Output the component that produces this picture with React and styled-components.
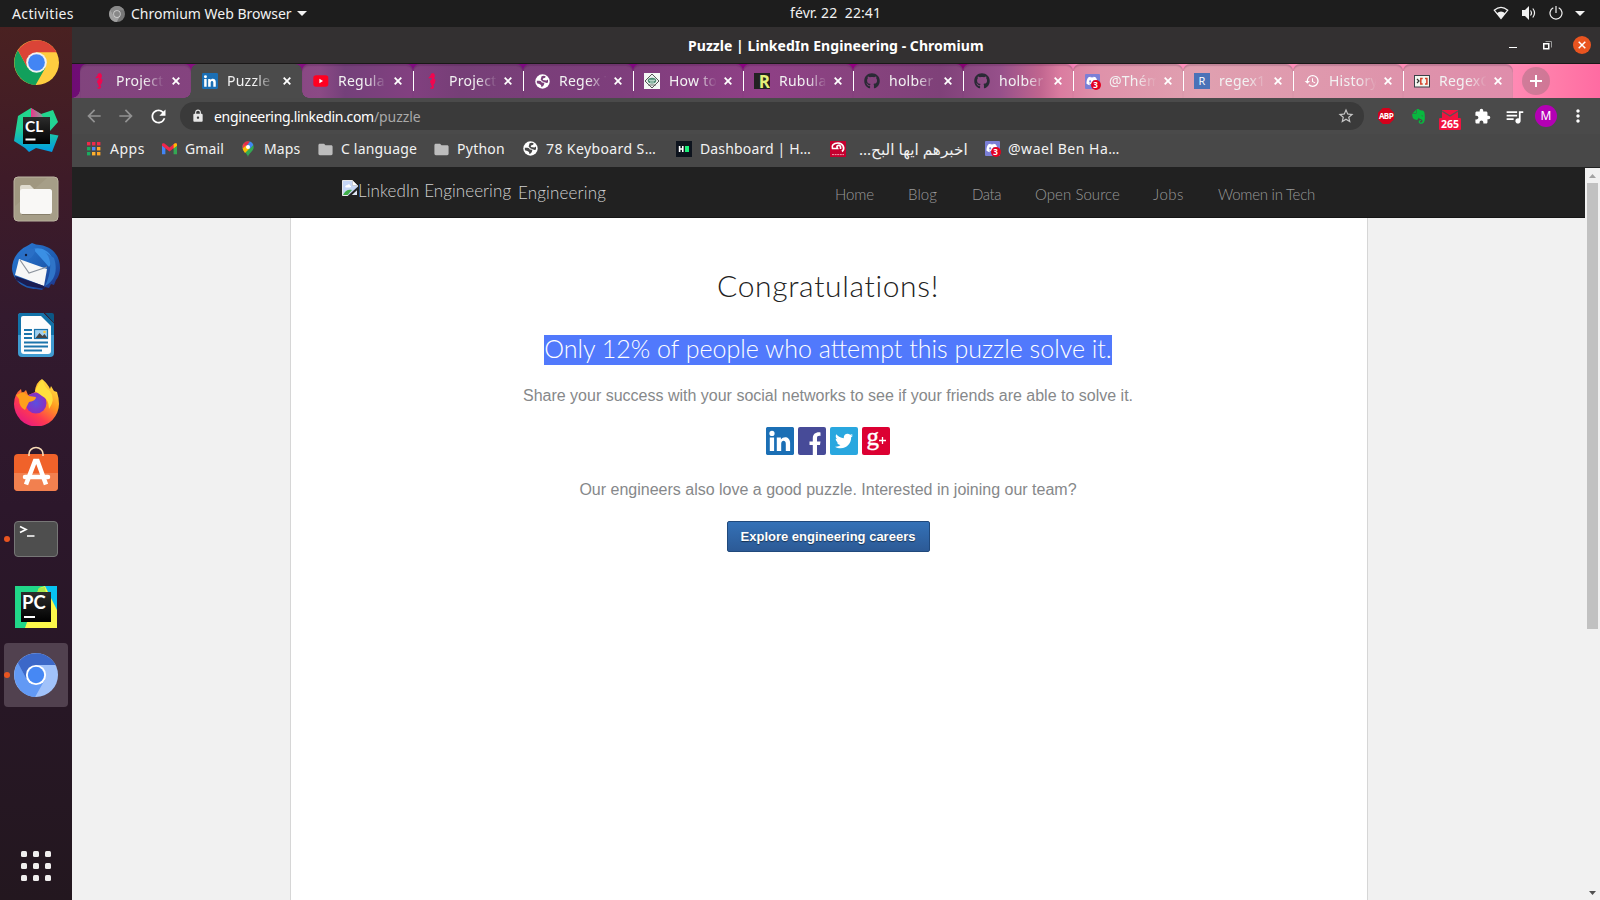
import React from "react";
import styled, { createGlobalStyle, css } from "styled-components";
import { MdArrowBack, MdArrowForward, MdRefresh, MdLock, MdStarBorder, MdExtension, MdQueueMusic, MdMoreVert, MdHistory, MdFolder } from "react-icons/md";
import { FaEvernote, FaGithub, FaTwitter, FaDiscord } from "react-icons/fa";

const UI = '"Noto Sans", "DejaVu Sans", sans-serif';
const SITE = 'Lato, "Liberation Sans", sans-serif';

const Global = createGlobalStyle`
  *, *::before, *::after { box-sizing: border-box; }
  body { margin: 0; overflow: hidden; background: #1d1d1d; }
  svg { display: block; flex: none; }
`;

const Screen = styled.div`
  width: 1600px; height: 900px; display: flex; flex-direction: column; overflow: hidden;
  font-family: ${UI}; font-size: 14px; color: #f2f2f2;
`;

const Label = styled.span`
  display: block; flex: none; white-space: pre;
  width: ${(p) => (p.$w ? `${p.$w}px` : "auto")};
  letter-spacing: ${(p) => p.$ls || 0}px;
`;

/* ---------- top panel ---------- */
const Panel = styled.header`
  height: 27px; flex: none; background: #1d1d1d; display: grid; grid-template-columns: 790px 1fr auto;
  align-items: center; line-height: 26px; padding-right: 15px;
`;
const PanelLeft = styled.div`display: flex; align-items: center; padding-left: 12px;`;
const AppMenu = styled.div`display: flex; align-items: center; gap: 6px; margin-left: 35px;`;
const Clock = styled.div`display: flex; margin-top: -1px;`;
const Tray = styled.div`display: flex; align-items: center; gap: 12px; margin-top: -1px;`;

/* ---------- dock ---------- */
const Body = styled.div`flex: 1; display: flex; min-height: 0;`;
const Dock = styled.nav`
  width: 72px; flex: none; padding: 4px 4px 19px; display: flex; flex-direction: column; gap: 4px;
  background: linear-gradient(#4a2121 0, #3e1b28 150px, #331a2e 290px, #2c172b 480px, #271725 680px, #23171f 873px);
`;
const DockItem = styled.div`
  position: relative; width: 64px; height: 64px; flex: none; border-radius: 4px;
  display: flex; align-items: center; justify-content: center; padding-bottom: ${(p) => p.$lift || 0}px;
  background: ${(p) => (p.$active ? "#51414f" : "transparent")};
`;
const RunningDot = styled.i`
  position: absolute; left: 0; top: 29px; width: 6px; height: 6px; border-radius: 50%; background: #e95420;
`;
const AppGrid = styled.div`
  margin: auto auto 0; display: grid; grid-template-columns: repeat(3, 6px); gap: 6px;
`;
const GridDot = styled.i`width: 6px; height: 6px; border-radius: 1.5px; background: #f0eeee;`;

/* ---------- window ---------- */
const Window = styled.section`flex: 1; min-width: 0; display: flex; flex-direction: column;`;
const TitleBar = styled.div`
  height: 37px; flex: none; background: #333031; border-bottom: 1px solid #1a1818; display: grid;
  grid-template-columns: 616px 1fr auto; align-items: center; padding-right: 9px; font-weight: 700; color: #fff;
`;
const WindowControls = styled.div`display: flex; align-items: center;`;
const Minimize = styled.i`width: 8px; height: 1px; background: #fff; margin: 5px 26px 0 0;`;
const CloseCircle = styled.div`
  width: 18px; height: 18px; border-radius: 50%; background: #e95420; margin-left: 21px;
  display: grid; place-items: center;
`;

const TabStrip = styled.div`
  height: 34px; flex: none; display: flex; padding-left: 8px;
  background: linear-gradient(90deg, #6e0c74 0, #86107f 120px, #7c0a80 500px, #93007f 800px, #7f0070 880px, #a5107f 940px, #ff8fbe 1010px, #ff8ab4 1440px, #ff7aa8 1490px, #ff6ba2 1528px);
`;
const TAB_FILL = "linear-gradient(90deg, #81447d 72px, #864380 250px, #8b4a85 320px, #74407a 345px, #824080 410px, #763f77 460px, #7e3e7c 620px, #8f4086 760px, #87437e 860px, #7f4179 940px, #96508a 1000px, #c0658f 1040px, #da7ca0 1060px, #df92aa 1100px, #e0a0b0 1200px, #de93ab 1400px, #df8dab 1514px) fixed";
const Tab = styled.div`
  position: relative; width: ${(p) => p.$w}px; height: 34px; flex: none; display: flex; align-items: center;
  padding-left: 11px; border-radius: 7px 7px 0 0;
  ${(p) => p.$active ? css`
    background: #4b4b4b;
    &::before, &::after { content: ""; position: absolute; bottom: 0; width: 7px; height: 7px; z-index: 1; }
    &::before { left: -7px; background: radial-gradient(circle at 0 0, transparent 6.5px, #4b4b4b 7px); }
    &::after { right: -7px; background: radial-gradient(circle at 100% 0, transparent 6.5px, #4b4b4b 7px); }
  ` : css`
    background: ${TAB_FILL};
    box-shadow: inset 0 2px 1px rgba(40, 0, 40, 0.16);
  `}
  ${(p) => p.$first && css`
    &::before { content: ""; position: absolute; left: -8px; bottom: 0; width: 8px; height: 8px; background: radial-gradient(circle at 0 0, transparent 7.5px, #81447d 8px); }
  `}
`;
const Divider = styled.i`position: absolute; right: -1px; top: 7px; width: 1px; height: 20px; background: #fff; z-index: 1;`;
const TabIcon = styled.div`width: 16px; height: 16px; flex: none; display: grid; place-items: center;`;
const TabTitle = styled.div`
  width: 47px; margin: 0 ${(p) => (p.$tight ? 8 : 9)}px 0 9px; overflow: hidden; white-space: nowrap; flex: none; line-height: 20px;
  letter-spacing: 0.25px; mask-image: linear-gradient(90deg, #000 28px, transparent 48px);
`;
const NewTab = styled.div`
  width: 28px; height: 28px; margin: 3px 0 0 9px; border-radius: 50%; background: rgba(150, 110, 125, 0.45);
  display: grid; place-items: center;
`;

const Toolbar = styled.div`
  height: 36px; flex: none; display: flex; align-items: center; background: #4a4a4a; padding: 0 6px;
`;
const ToolSlot = styled.div`width: 32px; height: 32px; flex: none; display: flex; align-items: center; justify-content: center;`;
const AddressBar = styled.div`
  flex: 1; height: 28px; margin: 0 6px; border-radius: 14px; background: #3a3a3a; display: flex; align-items: center;
  padding: 0 9px 0 11px;
`;
const Url = styled.div`display: flex; flex: 1; margin-left: 9px; color: #fff;`;
const UrlPath = styled(Label)`color: #a9a9a9;`;
const AbpBadge = styled.div`
  width: 16px; height: 16px; background: #d5001b; color: #fff; font: 700 8px/16px "Open Sans", sans-serif; letter-spacing: -0.6px; text-align: center;
  clip-path: polygon(30% 0, 70% 0, 100% 30%, 100% 70%, 70% 100%, 30% 100%, 0 70%, 0 30%);
`;
const MailBadge = styled.div`display: flex; flex-direction: column; align-items: center; margin-top: 8px;`;
const MailCount = styled.div`
  width: 22px; height: 12px; border-radius: 1px; background: #f2123f; color: #fff; font: 700 10.5px/12px "Open Sans", sans-serif; text-align: center;
`;
const Avatar = styled.div`
  width: 22px; height: 22px; border-radius: 50%; background: #b400b4; color: #fff; font-size: 12px; line-height: 22px; text-align: center;
`;
const Bookmarks = styled.div`
  height: 33px; flex: none; display: flex; align-items: center; padding: 0 14px 4px; background: #484848; line-height: 20px;
`;
const Bookmark = styled.div`
  width: ${(p) => p.$slot}px; flex: none; display: flex; align-items: center; gap: ${(p) => p.$gap || 8}px;
`;
const Fav = styled.div`width: 16px; height: 16px; flex: none; display: grid; place-items: center;`;

/* ---------- page ---------- */
const Viewport = styled.div`flex: 1; display: flex; min-height: 0;`;
const Page = styled.div`flex: 1; display: flex; flex-direction: column; background: #f1f1f1; font-family: ${SITE};`;
const SiteHeader = styled.div`
  height: 51px; flex: none; background: #212121; border-bottom: 1px solid #151515; display: flex; align-items: center;
  padding-left: 270px; font-weight: 300;
`;
const Brand = styled.div`display: flex; width: 493px; color: #d0d0d0; font-size: 17px; line-height: 22px;`;
const BrandName = styled(Label)`margin: 2px 0 0 7px;`;
const SiteNav = styled.div`display: flex; color: #9a9a9a; font-size: 15px; line-height: 20px; margin-top: 3px;`;
const NavLink = styled.div`width: ${(p) => p.$slot}px;`;
const Sheet = styled.main`
  flex: 1; width: 1078px; margin-left: 218px; padding-right: 2px; background: #fff; border: solid #d6d6d6; border-width: 0 1px;
  display: flex; flex-direction: column; align-items: center; color: #86888a;
`;
const Heading = styled.h1`
  margin: 49px 0 0; font-size: 30px; line-height: 36px; font-weight: 300; color: #222; letter-spacing: 0.65px;
  font-variant-ligatures: none;
`;
const Highlight = styled.h2`
  margin: 32px 0 0; height: 30px; font-size: 25px; line-height: 27px; font-weight: 300; background: #5179fc; color: #fff;
`;
const Copy = styled.p`margin: ${(p) => p.$top}px 0 0; font: 16px/20px "Liberation Sans", Arial, sans-serif;`;
const ShareRow = styled.div`display: flex; gap: 4.3px; margin-top: 21px;`;
const Share = styled.div`
  width: 28px; height: 28px; border-radius: 2px; background: ${(p) => p.$bg}; color: #fff; display: grid; place-items: center; overflow: hidden;
`;
const CareerButton = styled.button`
  width: 203px; height: 31px; margin-top: 21px; padding: 0; border: 1px solid #20497c; border-radius: 2px;
  background: linear-gradient(#3471b7, #2c5a96); color: #fff; font: 700 13px/28px "Liberation Sans", Arial, sans-serif;
  text-shadow: 0 1px 1px rgba(0, 0, 0, 0.5);
`;
const ScrollTrack = styled.div`
  width: 15px; flex: none; background: #f1f1f1; border-top: 1px solid #212121; display: flex; flex-direction: column; align-items: center;
`;
const ScrollArrow = styled.div`width: 15px; height: 15px; display: grid; place-items: center;`;
const ScrollThumb = styled.div`width: 11px; height: 446px; background: #c1c1c1;`;
const ScrollRest = styled.div`flex: 1;`;

/* ---------- drawings ---------- */
const Wheel = ({ size, red, green, yellow, blue, ring = "#f1f1f1" }) => (
  <svg width={size} height={size} viewBox="0 0 48 48">
    <circle cx="24" cy="24" r="24" fill={yellow} />
    <path d="M4.2 11 A24 24 0 0 0 23 48 L33.5 29.5 L14.5 29.5Z" fill={green} />
    <path d="M4.2 11 A24 24 0 0 1 45.4 13 L24 13 L13.5 28Z" fill={red} />
    <circle cx="24" cy="24" r="11" fill={ring} />
    <circle cx="24" cy="24" r="8.9" fill={blue} />
  </svg>
);
const Cross = ({ size = 8, w = 1.8 }) => (
  <svg width={size} height={size} viewBox="0 0 8 8"><path d="M.7.7l6.6 6.6M7.3.7L.7 7.3" stroke="#fff" strokeWidth={w} /></svg>
);
const Caret = () => <svg width="10" height="5" viewBox="0 0 10 5"><path d="M0 0h10L5 5z" fill="#f2f2f2" /></svg>;
const Seahorse = () => (
  <svg width="16" height="16" viewBox="0 0 16 16">
    <path d="M7.4 .6L9.3 0L10.6 1.6L11 3.6L10 5.2L11 6.4L11.8 6.8L11.2 8.2L11 10L9.8 11.2L9.4 12.4L10.2 13.6L9.6 15.2L8 16L6.4 15.2L6.8 14L7.8 14.2L8.2 13.4L7.2 12.2L7 10.6L6 9.4L6.4 7.4L7.6 6.2L7.8 4.8L6.4 5L4.8 5.4L4.6 4.4L6.4 3L6.6 1.6Z" fill="#f0064f" />
  </svg>
);
const LinkedInMark = ({ size, radius = 1.5 }) => (
  <svg width={size} height={size} viewBox="0 0 28 28">
    <rect width="28" height="28" rx={radius} fill="#1b6fb5" />
    <circle cx="6" cy="6.4" r="2.6" fill="#fff" />
    <path d="M3.8 10.5h4.3V24H3.8zM10.8 10.5h4.1v1.9c2.7-3.8 9.2-2.8 9.2 3.4V24h-4.3v-7.3c0-4-4.6-3.7-4.6 0V24h-4.4z" fill="#fff" />
  </svg>
);
const YouTube = () => (
  <svg width="16" height="16" viewBox="0 0 16 16"><rect x=".3" y="2.2" width="15" height="11.6" rx="2.8" fill="#ff0021" /><path d="M6.4 5.8v4.4L10 8z" fill="#fff" /></svg>
);
const Globe = ({ sea = "#484848" }) => (
  <svg width="15" height="15" viewBox="0 0 15 15">
    <circle cx="7.5" cy="7.500" r="7.200" fill="#fff" />
    <path d="M1.800 6.800L4.400 6.800Q6.600 7 6.800 8.600L9.400 8.800Q8.800 12.800 6.400 13L6 11Q4.800 9.600 1.900 9.200Z" fill={sea} />
    <path d="M6.600 2.200Q9 1.200 10.600 2.200L10.200 3.800L8 4.600L7.800 6L11.400 6.400L13 5.600L13 8.400L11.600 9L9.600 8.200L7.200 7.200L5.600 5.400Z" fill={sea} />
  </svg>
);
const Geek = () => (
  <svg width="16" height="16" viewBox="0 0 16 16">
    <rect width="16" height="16" fill="#f4f8f6" /><path d="M8 1l7 7-7 7-7-7z" fill="#e7f1ec" stroke="#444" strokeWidth=".9" />
    <ellipse cx="8" cy="7.6" rx="4.2" ry="2.9" fill="#4d8b72" /><path d="M5 7.3h6M6 9h4" stroke="#cfe5da" strokeWidth="1" /><path d="M4 12h8" stroke="#555" strokeWidth=".8" />
  </svg>
);
const LetterTile = styled.div`
  width: 16px; height: 16px; background: ${(p) => p.$bg}; color: ${(p) => p.$fg}; font: ${(p) => p.$font}; text-align: ${(p) => p.$align || "center"}; overflow: hidden;
`;
const DiscordBox = styled.div`position: relative; width: 15px; height: 15px; background: #7b7fd6; color: #fff; border-radius: 1px; padding: 1px 0 0 1px;`;
const Count = styled.b`
  position: absolute; right: -1px; bottom: -1px; width: 10px; height: 10px; border-radius: 50%; background: #e3001f; color: #fff; font: 700 8px/10px "Noto Sans", sans-serif; text-align: center;
`;
const Discord = () => <DiscordBox><FaDiscord size={12} /><Count>3</Count></DiscordBox>;
const Crossword = () => (
  <svg width="16" height="16" viewBox="0 0 16 16">
    <rect x=".5" y="2.5" width="15" height="11.5" fill="#f3f6ee" stroke="#3b4148" />
    <path d="M3 6l2 2-2 2" stroke="#333" fill="none" strokeWidth="1.2" /><path d="M8.7 5.500H6.800v5.500h1.900M11 5.500h1.900v5.500H11" stroke="#d5402a" fill="none" strokeWidth="1.5" />
  </svg>
);
const RedSwirl = () => (
  <svg width="16" height="16" viewBox="0 0 16 16"><rect width="16" height="16" fill="#c4002f" /><path d="M12 10.500C15.500 7.500 13 2 8 2S1.500 5 2.500 7.500H7.500Q6 4.500 8.500 4.300T10.500 8" fill="none" stroke="#fff" strokeWidth="1.700" /><path d="M2 13.600h12" stroke="#ec9cab" strokeWidth="1" strokeDasharray="2 .6" /></svg>
);
const Rank = () => (
  <svg width="16" height="16" viewBox="0 0 16 16"><rect width="16" height="16" fill="#0e141e" /><path d="M3.6 5v6M6.8 5v6M3.6 8h3" stroke="#fff" strokeWidth="1.6" /><path d="M9 5h4v6H9z" fill="#1bf07a" /></svg>
);
const AppsIcon = () => (
  <svg width="14" height="14" viewBox="0 0 14 14">
    {["#f0294a", "#f0294a", "#f0294a", "#1bab60", "#4c8bf5", "#ffa726", "#1bab60", "#ffb02e", "#ffa726"].map((c, i) => (
      <rect key={i} x={(i % 3) * 5} y={Math.floor(i / 3) * 5} width="3.4" height="3.4" fill={c} />
    ))}
  </svg>
);
const Gmail = () => (
  <svg width="15" height="12" viewBox="0 0 15 12">
    <path d="M0 2v9.3h3.4V5z" fill="#4285f4" /><path d="M15 2v9.3h-3.4V5z" fill="#34a853" />
    <path d="M0 1.6C0 .2 1.6-.2 2.5.6l5 3.9 5-3.9c1-.8 2.5-.4 2.5 1v1L7.5 8.6 0 2.8z" fill="#f0264a" /><path d="M11.6 1.4l1-.8c1-.7 2.4-.2 2.4 1v1.2L11.6 5.5z" fill="#fbbc04" />
  </svg>
);
const MapsPin = () => (
  <svg width="12" height="16" viewBox="0 0 12 16">
    <path d="M6 16C5.4 12 .3 10.5.3 6A5.7 5.7 0 0 1 11.7 6C11.7 10.5 6.6 12 6 16z" fill="#34a853" />
    <path d="M1.6 2.4A5.7 5.7 0 0 1 8 .6L4.4 5z" fill="#e8284a" /><path d="M8 .6a5.7 5.7 0 0 1 3.3 3.3L7.6 8 4.6 5z" fill="#4285f4" /><path d="M1.6 2.4L4.8 5 2 9.6C.4 7.6-.2 4.7 1.6 2.4z" fill="#f5384a" /><path d="M7.8 7.3L3 12C1.8 10.5 1 9 .6 7.6L4 4.6z" fill="#fbbc04" />
    <circle cx="6" cy="5.9" r="2" fill="#fff" />
  </svg>
);
const BrokenImage = () => (
  <svg width="16" height="16" viewBox="0 0 16 16">
    <path d="M.5.5h10l5 5v10H.5z" fill="#c6d6f5" stroke="#e8e8e8" /><path d="M10.5.5v5h5z" fill="#fff" stroke="#b9b9b9" strokeWidth=".6" />
    <path d="M3.2 7c0-1.4 1-2 2-1.7.7-1.6 3-1.2 3 .5 1.3.1 1.2 1.6 0 1.6H4z" fill="#fff" /><path d="M1 15c2-4.5 5.5-6 9-5l-4.4 5z" fill="#3fae49" /><path d="M16 6.4L5.6 16H16z" fill="#212121" /><path d="M15 10.2V15H9.8z" fill="#dfe7f5" />
  </svg>
);

const CLion = () => (
  <svg width="46" height="46" viewBox="0 0 46 46">
    <defs>
      <linearGradient id="clA" x1="0" y1="0" x2="0" y2="1"><stop offset="0" stopColor="#21d789" /><stop offset=".45" stopColor="#23d197" /><stop offset="1" stopColor="#009ae5" /></linearGradient>
      <linearGradient id="clB" x1="0" y1="0" x2="1" y2="0"><stop offset="0" stopColor="#ed358c" /><stop offset="1" stopColor="#7fa79a" /></linearGradient>
      <linearGradient id="blk" x1="0" y1="0" x2="0" y2="1"><stop offset="0" stopColor="#2c2c2c" /><stop offset="1" stopColor="#000" /></linearGradient>
    </defs>
    <path d="M1 34L5 9 18 1 28 7 40 3 45 15 37 24 37 27 45.500 28.500 39 45 23 41 16 45 12 41Z" fill="url(#clA)" />
    <path d="M18 1v9h12L28 7z" fill="url(#clB)" />
    <rect x="10" y="10" width="27" height="27" fill="url(#blk)" />
    <text x="12" y="25" fill="#fff" fontSize="15.5" fontWeight="700" fontFamily="Lato">CL</text><rect x="12.5" y="31.5" width="10" height="2" fill="#fff" />
  </svg>
);
const Files = () => (
  <svg width="46" height="46" viewBox="0 0 46 46">
    <rect x="1" y="1" width="44" height="44" rx="4" fill="#a09780" stroke="#bdb6a3" /><path d="M2 30L34 2h7q3 0 3 3v36q0 3-3 3H5q-3 0-3-3z" fill="#a69e88" />
    <path d="M7 14V11q0-2 2-2h8l4 4h16v6H7z" fill="#dfdbcf" /><rect x="7" y="13" width="32" height="25" rx="2.5" fill="#f9f8f6" /><path d="M9 38.5h28" stroke="#877f6b" />
  </svg>
);
const Thunderbird = () => (
  <svg width="50" height="50" viewBox="0 0 50 50">
    <defs><linearGradient id="tb" x1="0" y1="0" x2="1" y2="1"><stop offset="0" stopColor="#2b7bd6" /><stop offset=".6" stopColor="#1d5bb0" /><stop offset="1" stopColor="#1f2f86" /></linearGradient></defs>
    <path d="M21 1q4 2 8 2C42 5 49 14 49 26c0 8-4 12-4 12l-2 5-3-1-2 4-4-1-3 3-6-1C12 47 2 38 1 27 1 17 7 8 16 4z" fill="url(#tb)" />
    <path d="M22 7c9-3 18 3 20 12l-4 6z" fill="#3a8fe4" /><path d="M34 10c8 7 6 22 0 34 10-5 13-16 9-28z" fill="#2f74c8" />
    <path d="M8 17L4 33 33 44 36 27Z" fill="#f7f7f7" /><path d="M9 18l9 13 18-6" fill="none" stroke="#8d949e" strokeWidth="1.200" /><path d="M4 34l29 10 1 3-18-3-11-6z" fill="#1b1d52" />
    <path d="M9 17Q13 4 24 7 25 13 17 18Z" fill="#2a6fc6" /><circle cx="15" cy="13" r="1.2" fill="#111b3a" />
  </svg>
);
const Writer = () => (
  <svg width="38" height="46" viewBox="0 0 38 46">
    <path d="M4 1h22l11 11v29q0 4-4 4H5q-4 0-4-4V4q0-3 3-3z" fill="#3f9bd0" /><path d="M4 1h22l11 11v11H1V4q0-3 3-3z" fill="#1272a8" /><path d="M28 1h7q2 0 2 2v8z" fill="#0c5684" />
    <path d="M6 4h18l10 10v25q0 3-3 3H7q-3 0-3-3V6q0-2 2-2z" fill="#fdfdfd" />
    <path d="M7 18h8M7 22h8M7 26h8M7 30.500h24M7 34.500h24M7 38.500h18" stroke="#1b74ab" strokeWidth="1.900" />
    <rect x="17.500" y="17.500" width="13" height="9" fill="#9fd0f0" stroke="#1b74ab" strokeWidth="1.200" /><path d="M18.500 26l4-5 3 3 2-2 3 4z" fill="#444" /><circle cx="27.500" cy="20" r="1.300" fill="#ffc83a" />
  </svg>
);
const Firefox = () => (
  <svg width="46" height="48" viewBox="0 0 46 48">
    <defs>
      <linearGradient id="fx" x1=".9" y1="0" x2=".2" y2="1"><stop offset="0" stopColor="#fff44f" /><stop offset=".4" stopColor="#ff9a1f" /><stop offset=".7" stopColor="#ff3a50" /><stop offset="1" stopColor="#e31587" /></linearGradient>
      <radialGradient id="fp"><stop offset="0" stopColor="#5a4fe0" /><stop offset="1" stopColor="#8a2fc0" /></radialGradient>
    </defs>
    <path d="M29 1q6 5 8 10l1-3 3 5 3 1q2 6 2 12a22.500 22.500 0 0 1-45 0q0-10 7-15l1 5 4-4 2 5q4-1 7-3 0-9 7-13z" fill="url(#fx)" />
    <circle cx="23" cy="25" r="10.500" fill="url(#fp)" /><path d="M22 13q3-8 8-11 1 7 7 11 6 8-1 18 0-10-7-13-4-3-7-5z" fill="#ffdf3d" />
    <path d="M3 17l7-3 6 4 7 1q0 4-7 5l-4 8q-6-3-6-11z" fill="#ff9f1c" />
  </svg>
);
const Software = () => (
  <svg width="46" height="46" viewBox="0 0 46 46">
    <rect x="1" y="8" width="44" height="37" rx="4" fill="#f0622a" /><path d="M1 27h44v14q0 4-4 4H5q-4 0-4-4z" fill="#f2804f" />
    <path d="M16 10V8a7 6.500 0 0 1 14 0v2" fill="none" stroke="#f9dcb6" strokeWidth="1.600" />
    <path d="M13 38.500L22 15h2.500L33 38.500" fill="none" stroke="#fff" strokeWidth="4.500" /><path d="M12 31h23" stroke="#fff" strokeWidth="4.500" strokeLinecap="round" />
  </svg>
);
const Terminal = () => (
  <svg width="46" height="38" viewBox="0 0 46 38"><rect x="1.500" y="1.500" width="43" height="35" rx="3.500" fill="#4e4e4e" stroke="#777" /><path d="M7 6.500l6 3-6 3M14 16h7.500" fill="none" stroke="#fff" strokeWidth="1.700" /></svg>
);
const PyCharm = () => (
  <svg width="42" height="42" viewBox="0 0 42 42">
    <rect width="42" height="42" fill="#21d789" /><path d="M30 0h12v42H20z" fill="#07c3f2" /><path d="M10 42L24 2l6-2 12 24v18z" fill="#fcf84a" /><path d="M12 30L24 2l6-1 3 20z" fill="#a8e84e" />
    <rect x="6" y="6" width="30" height="30" fill="url(#blk)" />
    <text x="7" y="22.500" fill="#fff" fontSize="18.500" fontWeight="700" fontFamily="Lato">PC</text><rect x="9" y="30" width="11" height="2" fill="#fff" />
  </svg>
);

const dock = [
  { icon: <Wheel size={45} red="#db4437" green="#12a05c" yellow="#ffcd40" blue="#4285f4" />, lift: 1 },
  { icon: <CLion />, lift: 2 }, { icon: <Files /> }, { icon: <Thunderbird /> }, { icon: <Writer /> }, { icon: <Firefox />, lift: 3 }, { icon: <Software />, lift: 5 },
  { icon: <Terminal />, running: true }, { icon: <PyCharm /> },
  { icon: <Wheel size={44} red="#3c68c8" green="#6299f4" yellow="#a1c2fa" blue="#4688f4" ring="#fff" />, running: true, active: true },
];

const tabs = [
  ["Project", <Seahorse />], ["Puzzle |", <LinkedInMark size={16} radius={2} />], ["Regula", <YouTube />], ["Project", <Seahorse />],
  ["Regex T", <Globe sea="#7b4079" />], ["How to", <Geek />],
  ["Rubula", <LetterTile $bg="#222" $fg="#e4f07a" $font='700 17px/17px "Open Sans"' $align="right">R</LetterTile>],
  ["holber", <FaGithub size={16} color="#2a2a35" />], ["holber", <FaGithub size={16} color="#2a2a35" />], ["@Thém", <Discord />],
  ["regex1", <LetterTile $bg="#4a72b8" $fg="#fff" $font='11px/16px "Open Sans"'>R</LetterTile>],
  ["History", <MdHistory size={16} color="#fff" />], ["RegexC", <Crossword />],
];

const folder = <MdFolder size={17} color="#bdbdbd" />;
const bookmarks = [
  { t: "Apps", i: <AppsIcon />, slot: 75, ls: 0.5 }, { t: "Gmail", i: <Gmail />, slot: 79, ls: 0.13 }, { t: "Maps", i: <MapsPin />, slot: 77, ls: 0.1 },
  { t: "C language", i: folder, slot: 116, ls: 0.18 }, { t: "Python", i: folder, slot: 89, ls: 0.26 }, { t: "78 Keyboard S…", i: <Globe />, slot: 154, ls: 0.4 },
  { t: "Dashboard | H…", i: <Rank />, slot: 154, ls: 0.15 }, { t: "اخبرهم ايها البح…", i: <RedSwirl />, slot: 154, gap: 13, rtl: true },
  { t: "@wael Ben Ha…", i: <Discord />, slot: 140, ls: 0.52 },
];
const nav = [["Home", 73, -0.09], ["Blog", 64, 0.09], ["Data", 63, -0.4], ["Open Source", 118, 0.06], ["Jobs", 65, 0.5], ["Women in Tech", 97, -0.25]];

const BookmarkLabel = styled(Label)`font-size: ${(p) => (p.$rtl ? 15.3 : 14)}px;`;

export default function App() {
  return (
    <Screen>
      <Global />
      <Panel>
        <PanelLeft>
          <Label $w={62} $ls={0.36}>Activities</Label>
          <AppMenu>
            <Wheel size={16} red="#8a8a8a" green="#a0a0a0" yellow="#777" blue="#888" ring="#d8d8d8" />
            <Label $w={160}>Chromium Web Browser</Label>
            <Caret />
          </AppMenu>
        </PanelLeft>
        <Clock><Label $w={92} $ls={0.1}>{"févr. 22  22:41"}</Label></Clock>
        <Tray>
          <svg width="16" height="14" viewBox="0 0 16 14"><path d="M1.200 4.200Q8-1.500 14.800 4.200L8 12.500z" fill="none" stroke="#f2f2f2" strokeWidth="1.200" /><path d="M3.800 7.200Q8 4 12.200 7.200L8 12.500z" fill="#f2f2f2" /></svg>
          <svg width="16" height="14" viewBox="0 0 16 14"><path d="M1 4h3l4-4v14L4 10H1z" fill="#f2f2f2" /><path d="M9.500 4.500q2 2.500 0 5M11.800 2.500q3.500 4.500 0 9" fill="none" stroke="#f2f2f2" strokeWidth="1.200" /></svg>
          <svg width="14" height="14" viewBox="0 0 14 14"><path d="M4.300 1.700a6 6 0 1 0 5.400 0M7 0v7" fill="none" stroke="#f2f2f2" strokeWidth="1.200" /></svg>
          <Caret />
        </Tray>
      </Panel>
      <Body>
        <Dock>
          {dock.map((d, i) => (
            <DockItem key={i} $active={d.active} $lift={d.lift}>{d.running && <RunningDot />}{d.icon}</DockItem>
          ))}
          <AppGrid>{Array.from({ length: 9 }, (_, i) => <GridDot key={i} />)}</AppGrid>
        </Dock>
        <Window>
          <TitleBar>
            <span />
            <Label $ls={0.05}>Puzzle | LinkedIn Engineering - Chromium</Label>
            <WindowControls>
              <Minimize />
              <svg width="9" height="9" viewBox="0 0 9 9"><rect x=".75" y="2.750" width="5" height="5" fill="none" stroke="#fff" strokeWidth="1.500" /><path d="M2.500.5h6v6" fill="none" stroke="#999" /></svg>
              <CloseCircle><Cross w={1.5} /></CloseCircle>
            </WindowControls>
          </TitleBar>
          <TabStrip>
            {tabs.map(([t, icon], i) => (
              <Tab key={i} $w={i < 3 ? 111 : 110} $active={i === 1} $first={i === 0}>
                <TabIcon>{icon}</TabIcon><TabTitle $tight={i > 2}>{t}</TabTitle><Cross />
                {i > 1 && i < 12 && <Divider />}
              </Tab>
            ))}
            <NewTab><svg width="12" height="12" viewBox="0 0 12 12"><path d="M6 0v12M0 6h12" stroke="#fff" strokeWidth="2" /></svg></NewTab>
          </TabStrip>
          <Toolbar>
            <ToolSlot><MdArrowBack size={20} color="#929292" /></ToolSlot>
            <ToolSlot><MdArrowForward size={20} color="#929292" /></ToolSlot>
            <ToolSlot><MdRefresh size={21} color="#fff" /></ToolSlot>
            <AddressBar>
              <MdLock size={14} color="#e6e6e6" />
              <Url><Label $w={160} $ls={-0.33}>engineering.linkedin.com</Label><UrlPath $ls={-0.1}>/puzzle</UrlPath></Url>
              <MdStarBorder size={18} color="#c6c6c6" />
            </AddressBar>
            <ToolSlot><AbpBadge>ABP</AbpBadge></ToolSlot>
            <ToolSlot><FaEvernote size={17} color="#08b83f" /></ToolSlot>
            <ToolSlot><MailBadge><svg width="16" height="8" viewBox="0 0 16 8"><path d="M0 0h16v8H0z" fill="#f2123f" /><path d="M0 1l8 5 8-5" fill="none" stroke="#555" strokeWidth="1.300" /></svg><MailCount>265</MailCount></MailBadge></ToolSlot>
            <ToolSlot><MdExtension size={17} color="#fff" /></ToolSlot>
            <ToolSlot><MdQueueMusic size={21} color="#fff" /></ToolSlot>
            <ToolSlot><Avatar>M</Avatar></ToolSlot>
            <ToolSlot><MdMoreVert size={20} color="#fff" /></ToolSlot>
          </Toolbar>
          <Bookmarks>
            {bookmarks.map((b) => (
              <Bookmark key={b.t} $slot={b.slot} $gap={b.gap}><Fav>{b.i}</Fav><BookmarkLabel $ls={b.ls} $rtl={b.rtl} dir={b.rtl ? "rtl" : "ltr"}>{b.t}</BookmarkLabel></Bookmark>
            ))}
          </Bookmarks>
          <Viewport>
            <Page>
              <SiteHeader>
                <Brand><BrokenImage /><Label $w={153} $ls={0.06}>LinkedIn Engineering</Label><BrandName $ls={0.16}>Engineering</BrandName></Brand>
                <SiteNav>{nav.map(([t, slot, ls]) => <NavLink key={t} $slot={slot}><Label $ls={ls}>{t}</Label></NavLink>)}</SiteNav>
              </SiteHeader>
              <Sheet>
                <Heading>Congratulations!</Heading>
                <Highlight>Only 12% of people who attempt this puzzle solve it.</Highlight>
                <Copy $top={21}>Share your success with your social networks to see if your friends are able to solve it.</Copy>
                <ShareRow>
                  <Share $bg="#1b6fb5"><LinkedInMark size={28} /></Share>
                  <Share $bg="#474b98"><svg width="28" height="28" viewBox="0 0 28 28"><path d="M14.800 28V18h-3.300v-3.600h3.300v-3c0-4.300 2.700-6.500 7.700-6v3.500c-2.700-.2-3.500.4-3.500 2.300v3.200h3.500l-.5 3.600h-3V28z" fill="#fff" /></svg></Share>
                  <Share $bg="#29a7df"><FaTwitter size={18} /></Share>
                  <Share $bg="#dc0032"><svg width="28" height="28" viewBox="0 0 28 28"><text x="4.500" y="18" fill="#fff" stroke="#fff" strokeWidth=".4" fontSize="25" fontFamily="Liberation Serif, serif">g</text><path d="M17 13.500h7M20.500 10v7" stroke="#fff" strokeWidth="1.300" /></svg></Share>
                </ShareRow>
                <Copy $top={25}>Our engineers also love a good puzzle. Interested in joining our team?</Copy>
                <CareerButton>Explore engineering careers</CareerButton>
              </Sheet>
            </Page>
            <ScrollTrack>
              <ScrollArrow><svg width="7" height="4" viewBox="0 0 7 4"><path d="M0 4h7L3.500 0z" fill="#a3a3a3" /></svg></ScrollArrow>
              <ScrollThumb /><ScrollRest />
              <ScrollArrow><svg width="7" height="4" viewBox="0 0 7 4"><path d="M0 0h7L3.500 4z" fill="#505050" /></svg></ScrollArrow>
            </ScrollTrack>
          </Viewport>
        </Window>
      </Body>
    </Screen>
  );
}
